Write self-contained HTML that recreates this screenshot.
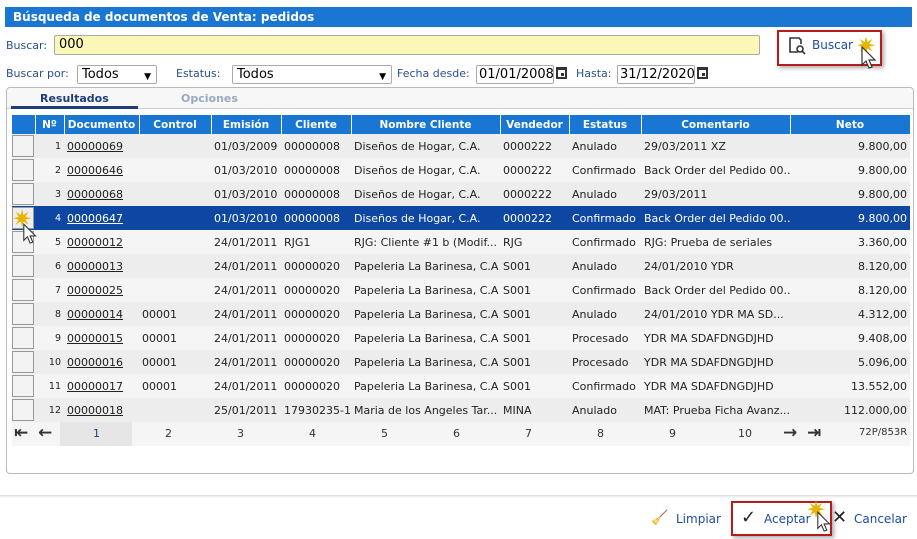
<!DOCTYPE html>
<html><head><meta charset="utf-8"><style>
*{box-sizing:border-box;margin:0;padding:0}
body{width:917px;height:539px;background:#fff;font-family:"DejaVu Sans","Liberation Sans",sans-serif;font-size:11px;color:#222;position:relative;overflow:hidden}
.abs{position:absolute}
.title{left:5px;top:7px;width:907px;height:20px;background:#1976d2;color:#fff;font-weight:bold;font-size:12px;line-height:20px;padding-left:8px}
.lbl{color:#2a4f8f;font-size:11px}
.inp{border:1px solid #aaa;background:#fff;font-size:13px;color:#000;padding-left:4px;border-radius:2px}
.sel::after{content:"▼";position:absolute;right:5px;top:3px;font-size:9px}
.panel{left:6px;top:87px;width:908px;height:387px;border:1px solid #bbb;border-radius:4px;background:#fff}
table{border-collapse:collapse;position:absolute;left:12px;top:115px;width:898px;table-layout:fixed}
th{background:#1976d2;color:#fff;font-size:10.5px;height:19px;border-right:1px solid #fff;font-weight:bold}
td{height:24px;white-space:nowrap;overflow:hidden;font-size:11px;padding:0 3px}
tr.o td{background:#ededed} tr.e td{background:#f5f5f5}
tr.s td{background:#0d47a1;color:#fff}
td u{text-decoration:underline}
.cb{padding:0}
.cb div{width:22px;height:22px;border:1px solid #999;background:#f3f3f3;margin-left:0}
.n{text-align:right;font-size:9.5px}
.r{text-align:right}
.pg{left:12px;top:422px;width:898px;height:24px;background:#f5f5f5}
.pg span{position:absolute;top:5px;font-size:11px;color:#333}
.cal{width:11px;height:12px;border:2px solid #333;border-top-width:3px}
.cal::after{content:"";position:absolute;right:1px;bottom:1px;width:3px;height:3px;background:#333}
</style></head><body>
<div class="abs title">Búsqueda de documentos de Venta: pedidos</div>
<div class="abs lbl" style="left:6px;top:39px">Buscar:</div>
<div class="abs inp" style="left:54px;top:35px;width:706px;height:20px;background:#fbf8b7;line-height:18px">000</div>
<div class="abs" style="left:777px;top:30px;width:105px;height:36px;border:2px solid #b71c1c;box-shadow:2px 2px 4px #aaa"></div>
<svg class="abs" style="left:788px;top:36px" width="20" height="20" viewBox="0 0 20 20" fill="none" stroke="#333" stroke-width="1.6"><path d="M10 16H2V2h9l2 2v4"/><circle cx="12" cy="13" r="3"/><path d="M14 15l3 3"/></svg>
<div class="abs" style="left:812px;top:38px;color:#1e4ca0;font-size:12px">Buscar</div>
<div class="abs" style="left:856px;top:36px;color:#e8b400;font-size:24px;line-height:20px">✷</div>
<svg class="abs" style="left:860px;top:46px" width="20" height="26" viewBox="0 0 20 26"><path d="M2 1v18l4-4 3 7 3-1-3-7h6z" fill="#fff" stroke="#333" stroke-width="1.2"/></svg>
<div class="abs lbl" style="left:6px;top:67px">Buscar por:</div>
<div class="abs inp sel" style="left:77px;top:65px;width:80px;height:19px;line-height:17px">Todos</div>
<div class="abs lbl" style="left:176px;top:67px">Estatus:</div>
<div class="abs inp sel" style="left:232px;top:65px;width:160px;height:19px;line-height:17px">Todos</div>
<div class="abs lbl" style="left:397px;top:67px">Fecha desde:</div>
<div class="abs inp" style="left:476px;top:65px;width:78px;height:19px;line-height:17px;padding-left:2px">01/01/2008</div>
<div class="abs cal" style="left:556px;top:67px"></div>
<div class="abs lbl" style="left:576px;top:67px">Hasta:</div>
<div class="abs inp" style="left:617px;top:65px;width:78px;height:19px;line-height:17px;padding-left:2px">31/12/2020</div>
<div class="abs cal" style="left:697px;top:67px"></div>
<div class="abs panel"></div>
<div class="abs" style="left:7px;top:88px;width:906px;height:21px;background:#f7f7f7;border-bottom:1px solid #ccc;border-radius:4px 4px 0 0"></div>
<div class="abs" style="left:40px;top:92px;font-weight:bold;color:#1e3d7a">Resultados</div>
<div class="abs" style="left:11px;top:106px;width:127px;height:3px;background:#1e3d7a"></div>
<div class="abs" style="left:181px;top:92px;font-weight:bold;color:#9aa8c0">Opciones</div>
<table>
<colgroup><col style="width:23px"><col style="width:29px"><col style="width:75px"><col style="width:72px"><col style="width:70px"><col style="width:70px"><col style="width:149px"><col style="width:69px"><col style="width:72px"><col style="width:149px"><col style="width:120px"></colgroup>
<tr><th></th><th>Nº</th><th>Documento</th><th>Control</th><th>Emisión</th><th>Cliente</th><th>Nombre Cliente</th><th>Vendedor</th><th>Estatus</th><th>Comentario</th><th>Neto</th></tr>
<tr class="o"><td class="cb"><div></div></td><td class="n">1</td><td><u>00000069</u></td><td></td><td>01/03/2009</td><td>00000008</td><td>Diseños de Hogar, C.A.</td><td>0000222</td><td>Anulado</td><td>29/03/2011 XZ</td><td class="r">9.800,00</td></tr>
<tr class="e"><td class="cb"><div></div></td><td class="n">2</td><td><u>00000646</u></td><td></td><td>01/03/2010</td><td>00000008</td><td>Diseños de Hogar, C.A.</td><td>0000222</td><td>Confirmado</td><td>Back Order del Pedido 00...</td><td class="r">9.800,00</td></tr>
<tr class="o"><td class="cb"><div></div></td><td class="n">3</td><td><u>00000068</u></td><td></td><td>01/03/2010</td><td>00000008</td><td>Diseños de Hogar, C.A.</td><td>0000222</td><td>Anulado</td><td>29/03/2011</td><td class="r">9.800,00</td></tr>
<tr class="s"><td class="cb"><div style="background:#eee"></div></td><td class="n">4</td><td><u>00000647</u></td><td></td><td>01/03/2010</td><td>00000008</td><td>Diseños de Hogar, C.A.</td><td>0000222</td><td>Confirmado</td><td>Back Order del Pedido 00...</td><td class="r">9.800,00</td></tr>
<tr class="e"><td class="cb"><div></div></td><td class="n">5</td><td><u>00000012</u></td><td></td><td>24/01/2011</td><td>RJG1</td><td>RJG: Cliente #1 b (Modif...</td><td>RJG</td><td>Confirmado</td><td>RJG: Prueba de seriales</td><td class="r">3.360,00</td></tr>
<tr class="o"><td class="cb"><div></div></td><td class="n">6</td><td><u>00000013</u></td><td></td><td>24/01/2011</td><td>00000020</td><td>Papeleria La Barinesa, C.A</td><td>S001</td><td>Anulado</td><td>24/01/2010 YDR</td><td class="r">8.120,00</td></tr>
<tr class="e"><td class="cb"><div></div></td><td class="n">7</td><td><u>00000025</u></td><td></td><td>24/01/2011</td><td>00000020</td><td>Papeleria La Barinesa, C.A</td><td>S001</td><td>Confirmado</td><td>Back Order del Pedido 00...</td><td class="r">8.120,00</td></tr>
<tr class="o"><td class="cb"><div></div></td><td class="n">8</td><td><u>00000014</u></td><td>00001</td><td>24/01/2011</td><td>00000020</td><td>Papeleria La Barinesa, C.A</td><td>S001</td><td>Anulado</td><td>24/01/2010 YDR MA SD...</td><td class="r">4.312,00</td></tr>
<tr class="e"><td class="cb"><div></div></td><td class="n">9</td><td><u>00000015</u></td><td>00001</td><td>24/01/2011</td><td>00000020</td><td>Papeleria La Barinesa, C.A</td><td>S001</td><td>Procesado</td><td>YDR MA SDAFDNGDJHD</td><td class="r">9.408,00</td></tr>
<tr class="o"><td class="cb"><div></div></td><td class="n">10</td><td><u>00000016</u></td><td>00001</td><td>24/01/2011</td><td>00000020</td><td>Papeleria La Barinesa, C.A</td><td>S001</td><td>Procesado</td><td>YDR MA SDAFDNGDJHD</td><td class="r">5.096,00</td></tr>
<tr class="e"><td class="cb"><div></div></td><td class="n">11</td><td><u>00000017</u></td><td>00001</td><td>24/01/2011</td><td>00000020</td><td>Papeleria La Barinesa, C.A</td><td>S001</td><td>Confirmado</td><td>YDR MA SDAFDNGDJHD</td><td class="r">13.552,00</td></tr>
<tr class="o" style="font-size:10.5px"><td class="cb"><div></div></td><td class="n">12</td><td><u>00000018</u></td><td></td><td>25/01/2011</td><td>17930235-1</td><td>Maria de los Angeles Tar...</td><td>MINA</td><td>Anulado</td><td>MAT: Prueba Ficha Avanz...</td><td class="r">112.000,00</td></tr>
</table>
<div class="abs pg">
<div class="abs" style="left:48px;top:0;width:72px;height:24px;background:#e6e6e6"></div>
<span style="left:2px;top:1px;font-size:17px;font-weight:bold">⇤</span><span style="left:26px;top:1px;font-size:17px;font-weight:bold">←</span>
<span style="left:81px;color:#1e3d7a">1</span><span style="left:153px">2</span><span style="left:225px">3</span><span style="left:297px">4</span><span style="left:369px">5</span><span style="left:441px">6</span><span style="left:513px">7</span><span style="left:585px">8</span><span style="left:657px">9</span><span style="left:726px">10</span>
<span style="left:771px;top:1px;font-size:17px;font-weight:bold">→</span><span style="left:795px;top:1px;font-size:17px;font-weight:bold">⇥</span>
<span style="left:847px;font-size:10px">72P/853R</span>
</div>
<div class="abs" style="left:0;top:495px;width:917px;height:3px;background:linear-gradient(#ddd,#fff)"></div>
<div class="abs" style="left:651px;top:510px;font-size:14px">🧹</div>
<div class="abs" style="left:676px;top:512px;color:#1e4ca0;font-size:12px">Limpiar</div>
<div class="abs" style="left:731px;top:501px;width:101px;height:35px;border:2px solid #b71c1c;box-shadow:2px 2px 4px #aaa"></div>
<div class="abs" style="left:741px;top:507px;font-size:18px">✓</div>
<div class="abs" style="left:764px;top:512px;color:#1e4ca0;font-size:12px">Aceptar</div>
<div class="abs" style="left:806px;top:496px;color:#e8b400;font-size:24px">✷</div>
<svg class="abs" style="left:816px;top:510px" width="18" height="26" viewBox="0 0 20 26"><path d="M2 1v18l4-4 3 7 3-1-3-7h6z" fill="#fff" stroke="#333" stroke-width="1.2"/></svg>
<div class="abs" style="left:832px;top:507px;font-size:18px">✕</div>
<div class="abs" style="left:854px;top:512px;color:#1e4ca0;font-size:12px">Cancelar</div>
<div class="abs" style="left:12px;top:205px;color:#e8b400;font-size:24px">✷</div>
<svg class="abs" style="left:22px;top:222px" width="18" height="26" viewBox="0 0 20 26"><path d="M2 1v18l4-4 3 7 3-1-3-7h6z" fill="#fff" stroke="#333" stroke-width="1.2"/></svg>
</body></html>
